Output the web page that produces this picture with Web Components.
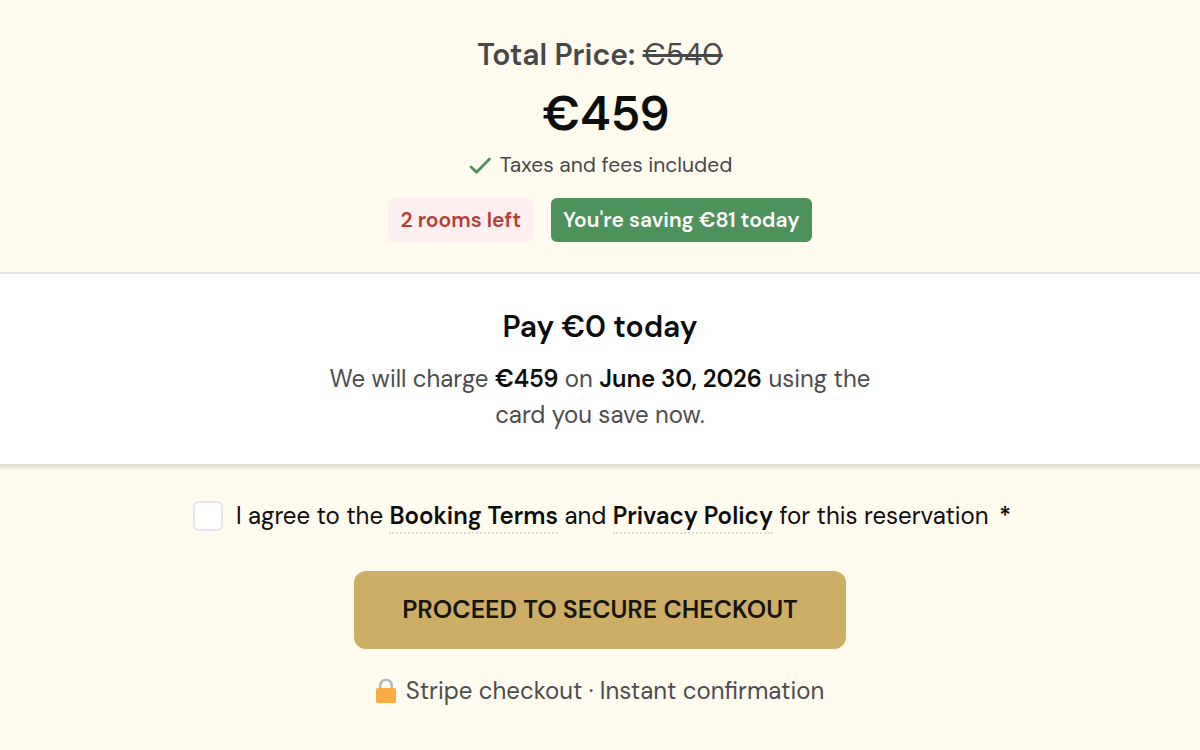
<!DOCTYPE html>
<html lang="en">
<head>
<meta charset="utf-8">
<meta name="viewport" content="width=device-width, initial-scale=1">
<title>Checkout</title>
<style>
  body {
    margin: 0;
    min-height: 100vh;
    background: #fffbef;
    color: #0c0c0c;
    font-family: "DM Sans", Inter, "Liberation Sans", sans-serif;
    font-size: 24px;
    line-height: 36px;
  }
</style>
</head>
<body>
<checkout-summary></checkout-summary>

<script>
  function define(name, markup) {
    const template = document.createElement('template');
    template.innerHTML = markup;
    customElements.define(name, class extends HTMLElement {
      constructor() {
        super();
        this.attachShadow({ mode: 'open' }).append(template.content.cloneNode(true));
      }
    });
  }

  define('price-badge', `
    <style>
      :host {
        display: block;
        padding: 4px 12px;
        border-radius: 6px;
        background: #fdeeef;
        color: #b23f37;
        font-size: 21px;
        font-weight: 600;
      }
      :host([tone="saving"]) { background: #4d915b; color: #fff; }
    </style>
    <slot></slot>`);

  define('price-total', `
    <style>
      :host {
        display: flex;
        flex-direction: column;
        align-items: center;
        padding: 37px 24px 30px;
        color: #47484a;
        text-align: center;
      }
      .label { margin: 0; font-size: 30px; font-weight: 600; }
      .label s { font-weight: 400; }
      .amount {
        margin: 8px 0 0;
        padding-left: 12px;
        color: #0c0c0c;
        font-size: 48px;
        font-weight: 600;
        line-height: 66px;
      }
      .taxes {
        display: flex;
        align-items: center;
        gap: 8px;
        margin: 0 0 15px;
        font-size: 21px;
      }
      .badges { display: flex; flex-wrap: wrap; justify-content: center; gap: 18px; }
    </style>
    <p class="label">Total Price: <s>€540</s></p>
    <p class="amount">€459</p>
    <p class="taxes">
      <svg width="24" height="24" viewBox="0 0 24 24" fill="none" stroke="#4d915b" stroke-width="2.800" stroke-linecap="round" stroke-linejoin="round" aria-hidden="true"><path d="M3 14 L8.500 19.300 L21.500 6"/></svg>
      Taxes and fees included
    </p>
    <div class="badges">
      <price-badge>2 rooms left</price-badge>
      <price-badge tone="saving">You're saving €81 today</price-badge>
    </div>`);

  define('payment-notice', `
    <style>
      :host {
        display: block;
        padding: 35px 24px 31px;
        border-top: 2px solid #e3e4e6;
        background: #fff;
        box-shadow: 0 -3px 6px 6px rgba(0, 0, 0, .15);
        clip-path: inset(0 0 -12px);
        text-align: center;
      }
      h2 { margin: 0 0 16px; font-size: 30px; font-weight: 600; line-height: 36px; }
      p { max-width: 576px; margin: 0 auto; color: #4c4c4e; }
      ::slotted(strong) { color: #0c0c0c; font-weight: 600; }
      ::slotted(.phrase) { display: inline-block; }
    </style>
    <h2><slot name="title"></slot></h2>
    <p><slot></slot></p>`);

  define('terms-consent', `
    <style>
      :host { display: flex; justify-content: center; align-items: center; gap: 13px; padding-left: 4px; }
      input {
        appearance: none;
        flex: none;
        width: 30px;
        height: 30px;
        margin: 0;
        border: 2px solid #e4e5e8;
        border-radius: 6px;
        background: #fff;
      }
      input:checked { background: #4d915b; }
      a {
        padding-bottom: 1px;
        border-bottom: 2px dotted #dcdbd4;
        color: inherit;
        font-weight: 600;
        text-decoration: none;
      }
      .required { margin-left: 4px; font-weight: 600; }
    </style>
    <input type="checkbox" id="agree" required>
    <label for="agree">I agree to the <a href="#terms">Booking Terms</a> and <a href="#privacy">Privacy Policy</a> for this reservation <span class="required">*</span></label>`);

  define('checkout-button', `
    <style>
      :host { display: block; }
      button {
        padding: 21px 48px;
        border: 0;
        border-radius: 12px;
        background: #ceae66;
        color: #16140c;
        font: inherit;
        font-size: 25px;
        font-weight: 600;
        text-transform: uppercase;
        cursor: pointer;
      }
    </style>
    <button type="button"><slot></slot></button>`);

  define('secure-note', `
    <style>
      :host { display: flex; align-items: center; gap: 10px; color: #4c4d4f; }
      svg { flex: none; }
    </style>
    <svg width="20" height="26" viewBox="0 0 20 26" aria-hidden="true">
      <path d="M4.200 12 V7.600 a5.800 5.800 0 0 1 11.600 0 V12" fill="none" stroke="#b0bec5" stroke-width="2.600"/>
      <rect x="0" y="10" width="20" height="15" rx="2" fill="#fbac45"/>
    </svg>
    <slot></slot>`);

  define('checkout-summary', `
    <style>
      :host { display: block; }
      .actions {
        display: flex;
        flex-direction: column;
        align-items: center;
        padding: 34px 24px 40px;
      }
      checkout-button { margin: 37px 0 24px; }
    </style>
    <price-total></price-total>
    <payment-notice>
      <span slot="title">Pay €0 today</span>
      We will charge <strong>€459</strong> on <strong>June 30, 2026</strong> using the <span class="phrase">card you save now.</span>
    </payment-notice>
    <div class="actions">
      <terms-consent></terms-consent>
      <checkout-button>Proceed to secure checkout</checkout-button>
      <secure-note>Stripe checkout · Instant confirmation</secure-note>
    </div>`);
</script>
</body>
</html>
